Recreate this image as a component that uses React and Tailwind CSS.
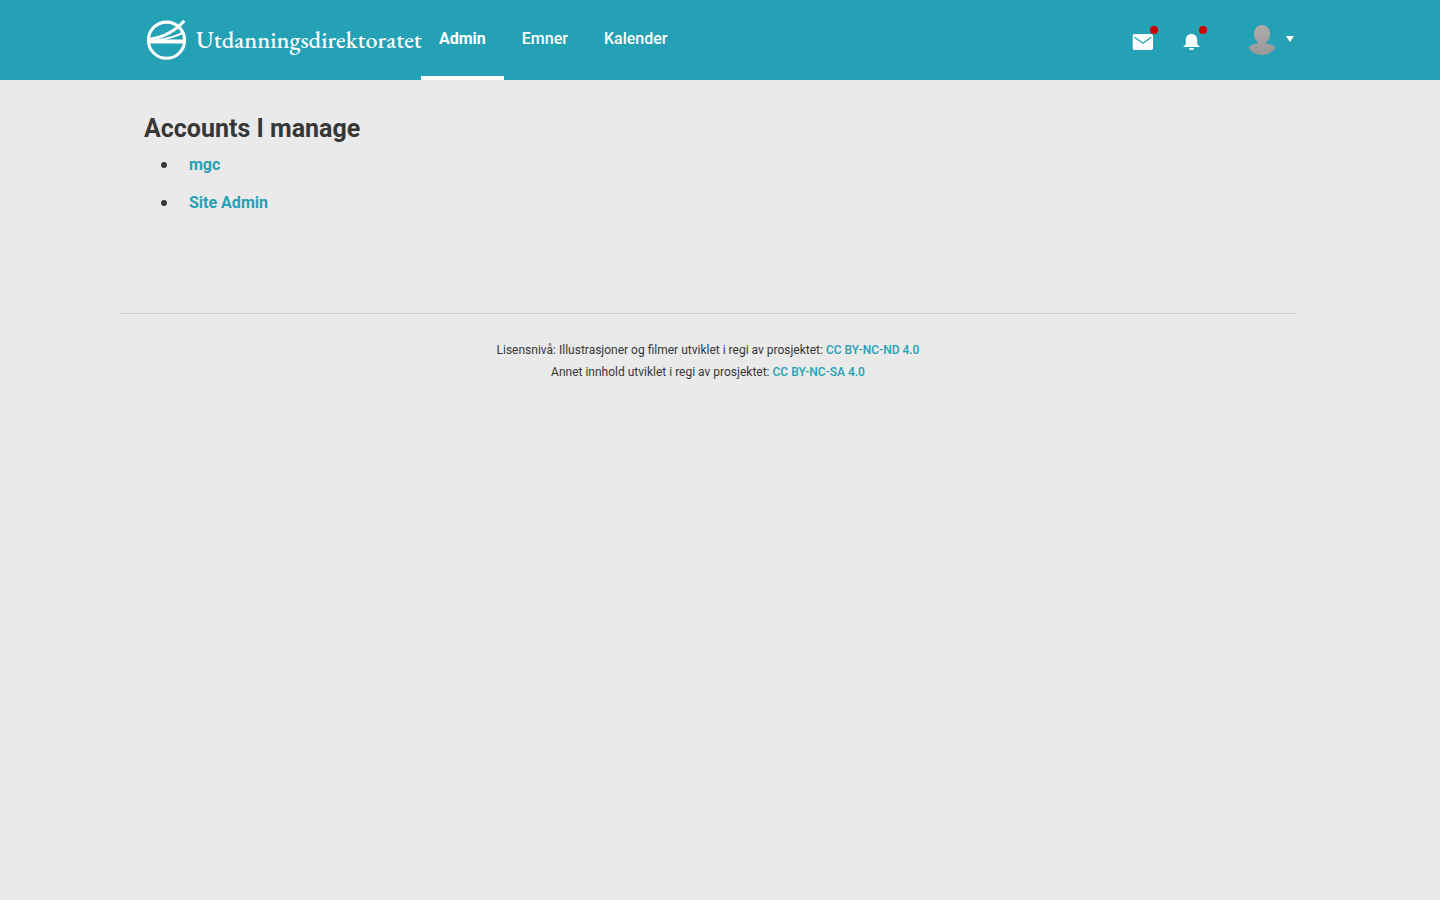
const navItems = [
  { label: "Admin", active: true },
  { label: "Emner", active: false },
  { label: "Kalender", active: false },
];

const accounts = ["mgc", "Site Admin"];

function Logo() {
  return (
    <a href="#home" className="flex w-[277px] items-center gap-2 whitespace-nowrap pl-0.5 text-white">
      <svg viewBox="0 0 42 42" className="h-[42px] w-[42px] shrink-0" fill="none" stroke="currentColor" aria-hidden="true">
        <circle cx="20.5" cy="21.2" r="18.1" strokeWidth="3.1" />
        <path d="M2.5 20.6C15 18.8 28.5 13 38.3 1.8" strokeWidth="3" />
        <path d="M11 21.2C22 19.8 30 17.6 37.4 13.4" strokeWidth="1.9" />
        <path d="M2.5 20.6H38.4V24.4H2.5Z" fill="currentColor" stroke="none" />
      </svg>
      <span className="font-['EB_Garamond','Liberation_Serif',serif] text-2xl font-medium leading-10">
        Utdanningsdirektoratet
      </span>
    </a>
  );
}

function IconButton({ label, children }) {
  return (
    <button type="button" aria-label={label} className="relative flex h-6 w-[22px] items-center justify-center text-white">
      {children}
      <span className="absolute -right-1 -top-1 h-2 w-2 rounded-full bg-[#cc0000]" />
    </button>
  );
}

function Header() {
  return (
    <header className="bg-[#25a1b5]">
      <div className="mx-auto flex h-20 w-4/5 items-stretch">
        <Logo />
        <nav className="flex" aria-label="Main">
          {navItems.map((item) => (
            <a
              key={item.label}
              href={`#${item.label.toLowerCase()}`}
              aria-current={item.active ? "page" : undefined}
              className={
                item.active
                  ? "flex items-center border-b-4 border-white px-[18px] pt-0.5 text-base font-bold text-white"
                  : "flex items-center border-b-4 border-transparent px-[18px] pt-0.5 text-base font-medium text-white"
              }
            >
              {item.label}
            </a>
          ))}
        </nav>
        <div className="ml-auto flex items-center">
          <div className="flex gap-[27px] pt-1">
            <IconButton label="Innboks">
              <svg viewBox="0 0 22 24" className="h-6 w-[22px]" aria-hidden="true">
                <rect x="0.7" y="4" width="20.3" height="16" rx="1.8" fill="white" />
                <path d="M2.5 7.2L11 13.2L19.3 7.2" fill="none" stroke="#25a1b5" strokeWidth="1.4" />
              </svg>
            </IconButton>
            <IconButton label="Varsler">
              <svg viewBox="0 0 22 24" className="h-6 w-[22px]" fill="white" aria-hidden="true">
                <path d="M10.5 4C14 4 16.2 6.4 16.2 10V13.2C16.2 14.8 17.2 15.5 18.5 16.2V17H2.5V16.2C3.8 15.5 4.8 14.8 4.8 13.2V10C4.8 6.4 7 4 10.5 4Z" />
                <path d="M8 18H13C13 19.5 12 20 10.5 20S8 19.5 8 18Z" />
              </svg>
            </IconButton>
          </div>
          <button type="button" aria-label="Brukermeny" className="ml-11 flex items-center gap-[9px] pr-0.5">
            <svg viewBox="0 0 30 32" className="h-8 w-[30px]" aria-hidden="true">
              <defs>
                <linearGradient id="avatar" x1="0" y1="0" x2="0" y2="1">
                  <stop offset="0" stopColor="#b0abaa" />
                  <stop offset="1" stopColor="#989898" />
                </linearGradient>
              </defs>
              <path
                d="M15 1C19.5 1 23 4.8 23 10C23 13.5 21.5 16.5 19.2 18V19.5C23.2 20 26.7 21.3 28.5 23.5C26 28.2 21 31 15 31S4 28.2 1.5 23.5C3.3 21.3 6.8 20 10.8 19.5V18C8.5 16.5 7 13.5 7 10C7 4.8 10.5 1 15 1Z"
                fill="url(#avatar)"
              />
            </svg>
            <svg viewBox="0 0 8 8" className="h-2 w-2" aria-hidden="true">
              <path d="M0 0H8L4 6Z" fill="white" />
            </svg>
          </button>
        </div>
      </div>
    </header>
  );
}

export default function App() {
  return (
    <div className="min-h-screen bg-[#eaeaea] font-['Roboto',sans-serif] text-[#373737]">
      <Header />
      <div className="pl-30 pr-36">
        <main className="px-6 pb-[91px] pt-[33px]">
          <h1 className="text-[25px] font-bold leading-8">Accounts I manage</h1>
          <ul className="mt-px text-base leading-[38px]">
            {accounts.map((name) => (
              <li key={name} className="flex items-center gap-[22px] pl-[17px]">
                <span className="h-1.5 w-1.5 rounded-full bg-[#373737]" aria-hidden="true" />
                <a href="#account" className="font-bold text-[#25a1b5]">
                  {name}
                </a>
              </li>
            ))}
          </ul>
        </main>
        <footer className="border-t border-[#c7cdd1] pt-[25px] text-center text-xs leading-[22px]">
          <p>
            Lisensnivå: Illustrasjoner og filmer utviklet i regi av prosjektet:{" "}
            <a href="#by-nc-nd" className="font-medium text-[#25a1b5]">CC BY-NC-ND 4.0</a>
          </p>
          <p>
            Annet innhold utviklet i regi av prosjektet:{" "}
            <a href="#by-nc-sa" className="font-medium text-[#25a1b5]">CC BY-NC-SA 4.0</a>
          </p>
        </footer>
      </div>
    </div>
  );
}
